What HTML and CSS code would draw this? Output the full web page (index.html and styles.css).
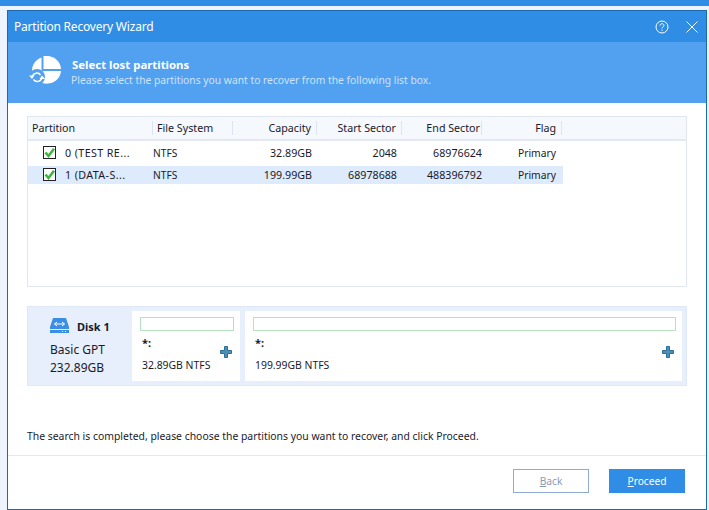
FILE: index.html
```html
<!DOCTYPE html>
<html lang="en">
<head>
<meta charset="utf-8">
<title>Partition Recovery Wizard</title>
<link rel="stylesheet" href="styles.css">
</head>
<body>
<div class="topbar"></div>
<div class="dialog">
  <header class="titlebar">
    <span class="title">Partition Recovery Wizard</span>
    <span class="winbtns">
      <svg width="14" height="14" viewBox="0 0 14 14" fill="none" stroke="#fff"><circle cx="7" cy="7" r="6"/><path d="M5 5.600C5 4.400 5.900 3.700 7 3.700S9 4.400 9 5.400C9 6.800 7 6.800 7 8.400"/><path d="M7 9.600V10.800"/></svg>
      <svg width="12" height="12" viewBox="0 0 12 12" fill="none" stroke="#fff"><path d="M.5.5L11.500 11.500M11.500.5L.5 11.500"/></svg>
    </span>
  </header>
  <section class="banner">
    <svg class="banner-icon" width="32" height="28" viewBox="0 0 32 28">
      <path fill="#fff" d="M14.500 0A15 14 0 0 1 32 13H14.500Z"/>
      <path fill="#fff" d="M12.500 1.500A14.500 13.500 0 1 0 32 15H12.500Z"/>
      <circle cx="8" cy="21" r="8" fill="#52a0f0"/>
      <path fill="none" stroke="#fff" stroke-width="1.500" d="M3.500 20C4.500 16.800 9.500 16 11.500 19M12.500 22.500C11.500 26 6.500 26.500 4.500 23.500"/>
      <path fill="#fff" d="M0 19.500L5.500 19.500L3 23ZM16 23L10.500 23L13 19.500Z"/>
    </svg>
    <div class="banner-text">
      <div class="banner-title">Select lost partitions</div>
      <div class="banner-sub">Please select the partitions you want to recover from the following list box.</div>
    </div>
  </section>
  <main class="content">
    <div class="listbox">
      <div class="row head">
        <span class="c1">Partition</span><span class="c2">File System</span><span class="r c3">Capacity</span><span class="r c4">Start Sector</span><span class="r c5">End Sector</span><span class="r c6">Flag</span>
      </div>
      <div class="row item">
        <span class="c1 namecell"><svg class="check" width="13" height="13" viewBox="0 0 13 13"><rect x=".5" y=".5" width="12" height="12" fill="#fff" stroke="#222"/><path d="M2.500 6.500L5.500 10L11 2.800" fill="none" stroke="#3fb53f" stroke-width="2.600"/></svg><span class="nm">0 (TEST RE...</span></span><span class="c2">NTFS</span><span class="r c3">32.89GB</span><span class="r c4">2048</span><span class="r c5">68976624</span><span class="r c6">Primary</span>
      </div>
      <div class="row item selected">
        <span class="c1 namecell"><svg class="check" width="13" height="13" viewBox="0 0 13 13"><rect x=".5" y=".5" width="12" height="12" fill="#fff" stroke="#222"/><path d="M2.500 6.500L5.500 10L11 2.800" fill="none" stroke="#3fb53f" stroke-width="2.600"/></svg><span class="nm">1 (DATA-S...</span></span><span class="c2">NTFS</span><span class="r c3">199.99GB</span><span class="r c4">68978688</span><span class="r c5">488396792</span><span class="r c6">Primary</span>
      </div>
    </div>
    <div class="diskmap">
      <div class="diskinfo">
        <div class="diskname">
          <svg width="19" height="17" viewBox="0 0 19 17"><path fill="#3b8ee6" d="M3 0H16L19 9V11H0V9Z"/><rect y="12" width="19" height="3" fill="#3b8ee6"/><path d="M4.500 6H14.500M4.500 6L7 4M4.500 6L7 8M14.500 6L12 4M14.500 6L12 8" stroke="#fff" fill="none"/><path d="M12 13.500h1M15 13.500h1" stroke="#fff"/></svg>
          <b>Disk 1</b>
        </div>
        <div class="diskline">Basic GPT</div>
        <div class="diskline">232.89GB</div>
      </div>
      <div class="part small">
        <div class="bar"></div>
        <div class="plabel">*:</div>
        <div class="psize">32.89GB NTFS</div>
        <svg class="plus" width="12" height="12" viewBox="0 0 12 12"><path fill="#4d90b4" stroke="#2a6f98" d="M4.500.5H7.500V4.500H11.500V7.500H7.500V11.500H4.500V7.500H.5V4.500H4.500Z"/></svg>
      </div>
      <div class="part big">
        <div class="bar"></div>
        <div class="plabel">*:</div>
        <div class="psize">199.99GB NTFS</div>
        <svg class="plus" width="12" height="12" viewBox="0 0 12 12"><path fill="#4d90b4" stroke="#2a6f98" d="M4.500.5H7.500V4.500H11.500V7.500H7.500V11.500H4.500V7.500H.5V4.500H4.500Z"/></svg>
      </div>
    </div>
    <p class="status">The search is completed, please choose the partitions you want to recover, and click Proceed.</p>
  </main>
  <footer class="footer">
    <button class="btn back"><u>B</u>ack</button>
    <button class="btn proceed"><u>P</u>roceed</button>
  </footer>
</div>
</body>
</html>
```
FILE: styles.css
```css
* { box-sizing: border-box; }
html, body { margin: 0; height: 510px; overflow: hidden; }
body {
  background: #eef4fd;
  font-family: "Noto Sans", "Open Sans", sans-serif;
  font-size: 10.400px;
  color: #1a1a2a;
}
.topbar {
  height: 6px;
  background: #2f8de6;
  margin-bottom: 4px;
}
.dialog {
  margin-left: 7px;
  width: 700px;
  height: 500px;
  border: 1px solid #1b6aad;
  background: #fff;
  display: flex;
  flex-direction: column;
}
.titlebar {
  height: 31px;
  background: #2f8de6;
  color: #fff;
  display: flex;
  align-items: center;
  justify-content: space-between;
  padding: 0 8px 0 6px;
  font-size: 12px;
  letter-spacing: -0.2px;
}
.winbtns { display: flex; align-items: center; gap: 17px; }
.banner {
  height: 61px;
  background: #52a0f0;
  display: flex;
  align-items: center;
  padding-left: 21px;
  gap: 11px;
}
.banner-icon { margin-bottom: 5px; }
.banner-title { font-weight: 700; color: #fff; font-size: 11.400px; line-height: 15px; }
.banner-sub { color: #cfe3fb; font-size: 10.300px; line-height: 17px; margin-left: -1px; }
.content {
  flex: 1;
  padding: 13px 19px 0;
}
.listbox {
  height: 171px;
  border: 1px solid #e1e7f0;
  background: #fff;
}
.row {
  display: grid;
  grid-template-columns: 125px 80px 84px 85px 80px 80px;
  align-items: center;
  width: 535px;
  font-size: 10.700px;
}
.row > span { padding-left: 4px; padding-right: 5px; white-space: nowrap; }
.row > .c5 { padding-right: 1px; }
.row .r { text-align: right; }
.head {
  width: 100%;
  height: 24px;
  background: #f5f8fc;
  border-bottom: 2px solid #e3e9f2;
  margin-bottom: 3px;
  grid-template-columns: 125px 80px 84px 85px 80px 80px 1fr;
}
.head > span {
  height: 14px;
  line-height: 14px;
  border-right: 1px solid #dfe5ee;
}
.item { height: 18px; margin-bottom: 4px; }
.item > span { padding-bottom: 1px; }
.item > .c2 { padding-left: 0; font-size: 10.200px; }
.item > .c5 { padding-right: 0; }
.item > .c6 { padding-right: 6px; font-size: 10.300px; }
.selected { background: #ddebfc; }
.namecell { display: flex; align-items: center; padding-left: 15px !important; }
.nm { margin-left: 9px; letter-spacing: 0.4px; }
.diskmap {
  margin-top: 19px;
  height: 80px;
  background: #e6effb;
  border: 1px solid #dfe8f6;
  display: flex;
  padding: 4px;
  gap: 5px;
}
.diskinfo { width: 95px; padding: 6px 0 0 18px; }
.diskname { display: flex; align-items: center; gap: 8px; height: 19px; margin-bottom: 5px; }
.diskname b { font-size: 11px; }
.diskline { font-size: 12px; line-height: 18px; }
.part {
  background: #fff;
  position: relative;
  padding: 6px 6px 0 8px;
}
.small { width: 108px; }
.big { flex: 1; }
.bar { height: 14px; border: 1px solid #b5e2c0; background: #fff; margin-bottom: 5px; }
.plabel { font-weight: 700; line-height: 14px; margin-bottom: 8px; padding-left: 2px; font-size: 11px; }
.psize { line-height: 14px; padding-left: 2px; }
.plus { position: absolute; right: 8px; top: 35px; }
.status { margin: 43px 0 0; line-height: 14px; }
.footer {
  height: 54px;
  border-top: 1px solid #e6e8ee;
  display: flex;
  justify-content: flex-end;
  align-items: flex-start;
  gap: 20px;
  padding: 13px 21px 0 0;
}
.btn {
  width: 76px;
  height: 24px;
  font: inherit;
  font-size: 10.200px;
  padding: 0;
}
.back { background: #fff; border: 1px solid #8facd8; color: #8a9bb8; }
.proceed { background: #2f8de6; border: 0; color: #fff; }
```
